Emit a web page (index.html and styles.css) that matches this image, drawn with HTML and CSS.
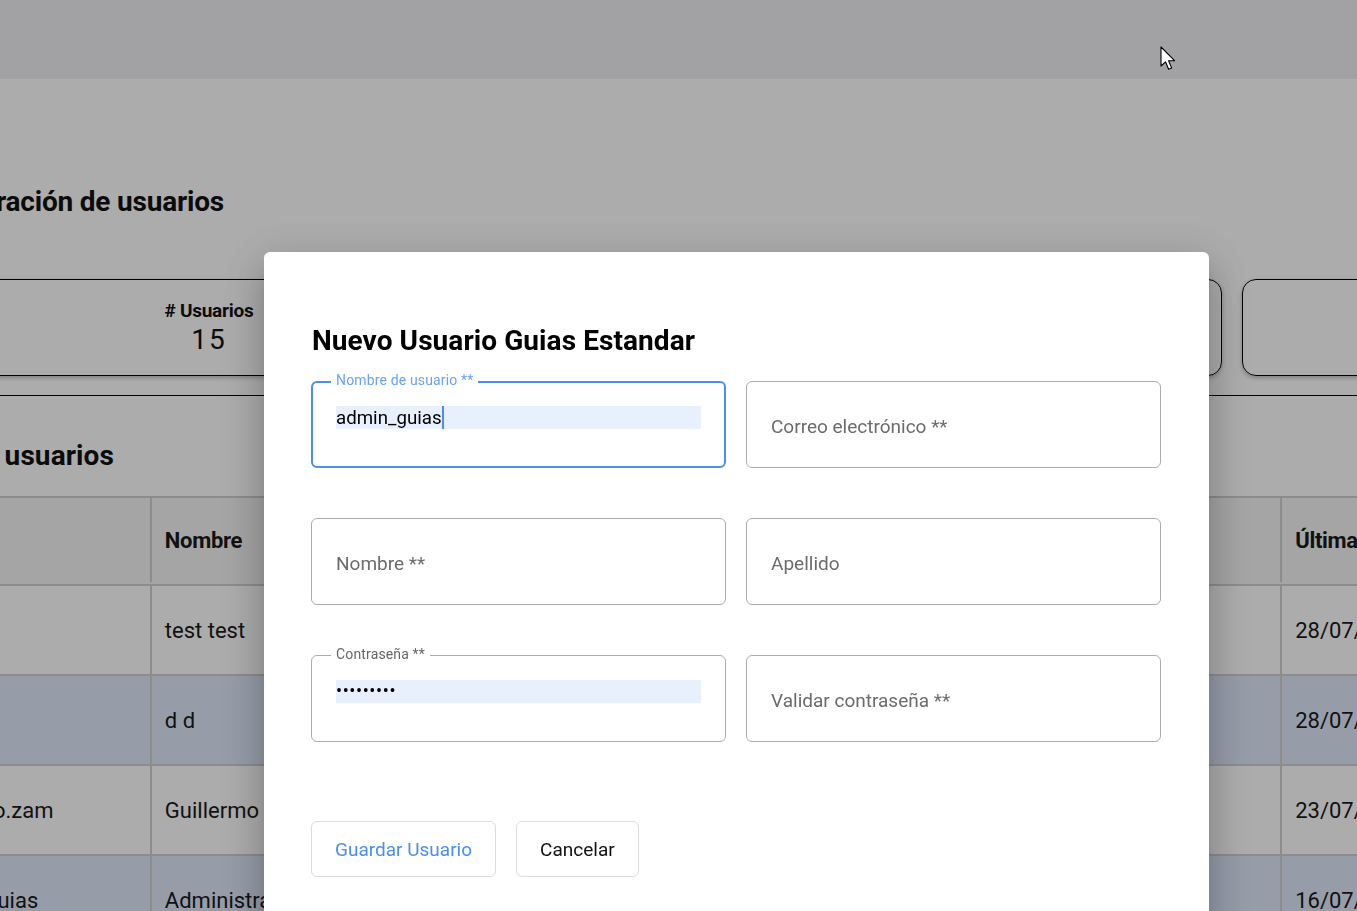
FILE: index.html
```html
<!DOCTYPE html>
<html lang="es">
<head>
<meta charset="utf-8">
<title>Administración de usuarios</title>
<link rel="stylesheet" href="styles.css">
</head>
<body>
<div class="page">
  <header class="topbar"></header>
  <main class="content">
    <div class="title-wrap"><h1 class="page-title">Administración de usuarios</h1></div>
    <div class="stats">
      <div class="stat-card"><div class="stat-label"># Usuarios</div><div class="stat-value">15</div></div>
      <div class="stat-card"><div class="stat-label"># Activos</div><div class="stat-value">12</div></div>
      <div class="stat-card"><div class="stat-label"># Inactivos</div><div class="stat-value">3</div></div>
    </div>
    <section class="list">
      <div class="list-title-wrap"><h2 class="list-title">Lista de usuarios</h2></div>
      <div class="table">
        <div class="row head">
          <div class="cell c1">Usuario</div><div class="cell c2">Nombre</div><div class="cell c3">Correo</div><div class="cell c4">Rol</div><div class="cell c5">Última conexión</div>
        </div>
        <div class="row">
          <div class="cell c1">test</div><div class="cell c2">test test</div><div class="cell c3">test@test.com</div><div class="cell c4">Estandar</div><div class="cell c5">28/07/2023</div>
        </div>
        <div class="row alt">
          <div class="cell c1">d</div><div class="cell c2">d d</div><div class="cell c3">d@d.com</div><div class="cell c4">Estandar</div><div class="cell c5">28/07/2023</div>
        </div>
        <div class="row">
          <div class="cell c1">guillermo.zam</div><div class="cell c2">Guillermo Zamora</div><div class="cell c3">gzamora@mail.com</div><div class="cell c4">Admin</div><div class="cell c5">23/07/2023</div>
        </div>
        <div class="row alt">
          <div class="cell c1">admin_guias</div><div class="cell c2">Administrador Guias</div><div class="cell c3">guias@mail.com</div><div class="cell c4">Admin</div><div class="cell c5">16/07/2023</div>
        </div>
      </div>
    </section>
  </main>
</div>

<div class="overlay">
  <div class="modal">
    <h2 class="modal-title">Nuevo Usuario Guias Estandar</h2>
    <div class="form-grid">
      <div class="field focused">
        <span class="float-label">Nombre de usuario **</span>
        <div class="value autofill"><span>admin_guias</span><span class="caret"></span></div>
      </div>
      <div class="field empty"><span class="placeholder">Correo electrónico **</span></div>
      <div class="field empty"><span class="placeholder">Nombre **</span></div>
      <div class="field empty"><span class="placeholder">Apellido</span></div>
      <div class="field">
        <span class="float-label grey">Contraseña **</span>
        <div class="value autofill dots">•••••••••</div>
      </div>
      <div class="field empty"><span class="placeholder">Validar contraseña **</span></div>
    </div>
    <div class="actions">
      <button class="btn primary">Guardar Usuario</button>
      <button class="btn">Cancelar</button>
    </div>
  </div>
  <svg class="cursor" width="20" height="28" viewBox="0 0 20 28" aria-hidden="true">
    <path d="M1 1 L1 20 L5.5 15.8 L8.6 23.2 L11.6 21.9 L8.6 14.8 L14.6 14.6 Z" fill="#fff" stroke="#000" stroke-width="1.1" stroke-linejoin="round"/>
  </svg>
</div>
</body>
</html>
```

FILE: styles.css
```css
* { box-sizing: border-box; }
html, body { margin: 0; padding: 0; }
body {
  width: 1357px;
  height: 911px;
  overflow: hidden;
  background: #fff;
  font-family: Roboto, "Noto Sans", "Liberation Sans", sans-serif;
  color: #111;
}

.page { width: 1357px; }
.topbar { height: 79px; background: #f0f0f3; }

.content { padding-top: 107px; }

.title-wrap { width: 224px; display: flex; justify-content: flex-end; }
.page-title {
  margin: 0;
  font-size: 28px;
  line-height: 32px;
  font-weight: 700;
  white-space: nowrap;
  letter-spacing: -0.2px;
}

.stats {
  display: grid;
  grid-template-columns: 538px 724px 560px;
  gap: 20px;
  margin: 61px 0 0 -60px;
}
.stat-card {
  height: 97px;
  border: 1px solid #000;
  border-radius: 14px;
  box-shadow: 0 2px 4px rgba(0,0,0,0.25);
  display: flex;
  flex-direction: column;
  align-items: center;
  padding-top: 20px;
}
.stat-label { font-size: 19px; font-weight: 700; line-height: 22px; letter-spacing: -0.25px; }
.stat-value { font-size: 28px; line-height: 36px; letter-spacing: 2px; font-weight: 400; }

.list {
  margin-top: 19px;
  border-top: 1px solid #000;
  padding-top: 44px;
}
.list-title-wrap { width: 114px; display: flex; justify-content: flex-end; }
.list-title {
  margin: 0;
  font-size: 28px;
  line-height: 32px;
  font-weight: 700;
  white-space: nowrap;
  letter-spacing: 0.1px;
}

.table { margin: 24px 0 0 -99px; width: 1700px; border-top: 2px solid #d0d0d0; }
.row { display: flex; height: 90px; border-bottom: 2px solid #d0d0d0; background: #fff; }
.row.head { height: 88px; background: #f5f5f5; padding-bottom: 2px; }
.row.alt { background: #dee9fb; }
.cell {
  display: flex;
  align-items: center;
  padding-left: 13px;
  font-size: 22px;
  white-space: nowrap;
  overflow: hidden;
  border-right: 2px solid #d0d0d0;
  color: #1a1a1a;
}
.row.head .cell { font-weight: 700; letter-spacing: -0.3px; }
.c1 { width: 251px; }
.c2 { width: 360px; }
.c3 { width: 400px; }
.c4 { width: 371px; }
.c5 { width: 319px; border-right: none; }

/* modal */
.overlay {
  position: fixed;
  inset: 0;
  background: rgba(0,0,0,0.325);
  padding: 252px 0 0 264px;
}
.modal {
  width: 945px;
  height: 800px;
  background: #fff;
  border-radius: 6px;
  padding: 73px 48px 0 47px;
  box-shadow: 0 11px 15px -7px rgba(0,0,0,0.2), 0 24px 38px 3px rgba(0,0,0,0.14), 0 9px 46px 8px rgba(0,0,0,0.12);
}
.modal-title {
  margin: 0 0 24px 1px;
  font-size: 28px;
  line-height: 32px;
  font-weight: 700;
  color: #000;
  letter-spacing: 0.08px;
}
.form-grid {
  display: grid;
  grid-template-columns: 415px 415px;
  column-gap: 20px;
  row-gap: 50px;
}
.field {
  position: relative;
  height: 87px;
  border: 1px solid #acacac;
  border-radius: 6px;
  padding: 24px 24px 0 24px;
}
.field.focused {
  border: 2px solid #4a8fe8;
  padding: 23px 23px 0 23px;
}
.field.empty { display: flex; align-items: center; padding: 3px 24px 0; }
.placeholder { font-size: 19px; color: #6b6b6b; }
.float-label {
  position: absolute;
  top: -10px;
  left: 19px;
  padding: 0 5px;
  background: #fff;
  font-size: 14px;
  line-height: 16px;
  color: #6aa2f0;
  letter-spacing: 0.15px;
}
.field.focused .float-label { top: -11px; left: 18px; }
.float-label.grey { color: #666; }
.value {
  height: 23px;
  display: flex;
  align-items: center;
  font-size: 18.7px;
  color: #000;
}
.autofill { background: #e8f0fe; }
.caret { width: 2px; height: 23px; background: #4a8fe8; }
.dots { font-size: 18px; letter-spacing: 0.6px; padding-bottom: 2px; }

.actions { display: flex; gap: 20px; margin-top: 79px; }
.btn {
  height: 56px;
  padding: 0 23px;
  border: 1px solid #dcdcdc;
  border-radius: 6px;
  background: #fff;
  font-family: Roboto, "Noto Sans", sans-serif;
  font-size: 19px;
  color: #111;
}
.btn.primary { color: #4a8fe8; }

.cursor { position: absolute; left: 1160px; top: 46px; }
```
